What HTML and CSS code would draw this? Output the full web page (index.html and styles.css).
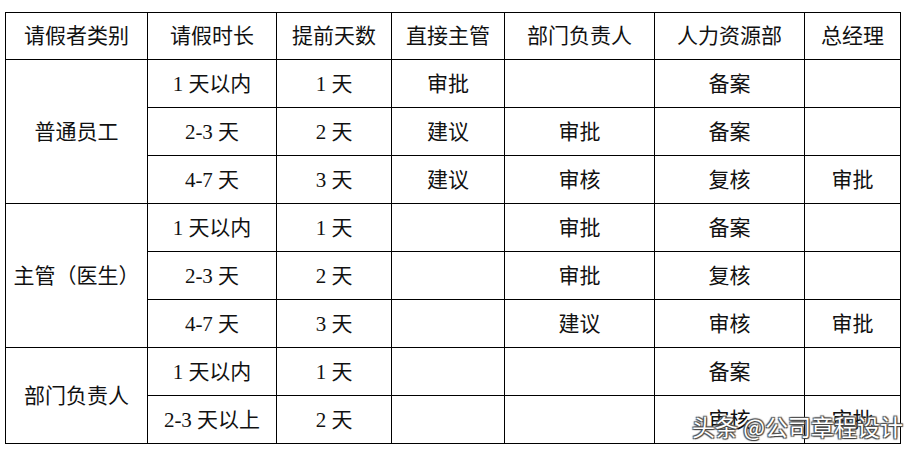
FILE: index.html
```html
<!DOCTYPE html>
<html lang="zh-CN">
<head>
<meta charset="utf-8">
<link rel="stylesheet" href="styles.css">
</head>
<body>
<div class="page">
<table class="grid">
  <colgroup>
    <col class="c1"><col class="c2"><col class="c3"><col class="c4"><col class="c5"><col class="c6"><col class="c7">
  </colgroup>
  <tr class="head">
    <td>请假者类别</td><td>请假时长</td><td>提前天数</td><td>直接主管</td><td>部门负责人</td><td>人力资源部</td><td>总经理</td>
  </tr>
  <tr><td rowspan="3">普通员工</td><td>1 天以内</td><td>1 天</td><td>审批</td><td></td><td>备案</td><td></td></tr>
  <tr><td>2-3 天</td><td>2 天</td><td>建议</td><td>审批</td><td>备案</td><td></td></tr>
  <tr><td>4-7 天</td><td>3 天</td><td>建议</td><td>审核</td><td>复核</td><td>审批</td></tr>
  <tr><td rowspan="3">主管（医生）</td><td>1 天以内</td><td>1 天</td><td></td><td>审批</td><td>备案</td><td></td></tr>
  <tr><td>2-3 天</td><td>2 天</td><td></td><td>审批</td><td>复核</td><td></td></tr>
  <tr><td>4-7 天</td><td>3 天</td><td></td><td>建议</td><td>审核</td><td>审批</td></tr>
  <tr><td rowspan="2">部门负责人</td><td>1 天以内</td><td>1 天</td><td></td><td></td><td>备案</td><td></td></tr>
  <tr><td>2-3 天以上</td><td>2 天</td><td></td><td></td><td>审核</td><td>审批</td></tr>
</table>
<div class="mark">头条 @公司章程设计</div>
</div>
</body>
</html>
```

FILE: styles.css
```css
html, body {
  margin: 0;
  padding: 0;
  background: #fff;
}
.page {
  position: relative;
  width: 918px;
  height: 456px;
  padding: 12px 0 0 5px;
  box-sizing: border-box;
}
.grid {
  border-collapse: collapse;
  table-layout: fixed;
  width: 896px;
  font-family: "Liberation Serif", "Noto Sans CJK SC", serif;
  font-size: 21px;
  color: #111;
}
.c1 { width: 142px; }
.c2 { width: 129px; }
.c3 { width: 115px; }
.c4 { width: 113px; }
.c5 { width: 150px; }
.c6 { width: 150px; }
.c7 { width: 96px; }
.grid td {
  border: 1.3px solid #000;
  text-align: center;
  vertical-align: middle;
  padding: 0;
  height: 47px;
  line-height: 24px;
}
.grid .head td {
  height: 46px;
}
.mark {
  position: absolute;
  left: 692px;
  top: 409px;
  font-family: "Noto Sans CJK SC", sans-serif;
  font-size: 23px;
  line-height: 34px;
  color: #fff;
  text-shadow: 0 0 1px #333, 1px 1px 1px #444, -1px -1px 1px #555, 1px -1px 1px #555, -1px 1px 1px #555;
}
```
